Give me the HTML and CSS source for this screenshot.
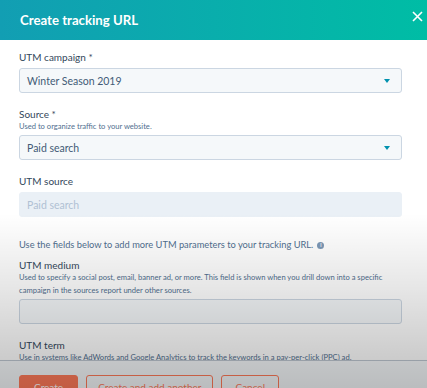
FILE: index.html
```html
<!DOCTYPE html>
<html>
    <head>
        <title>Create tracking URL</title>
        <link rel="stylesheet" href="styles.css">
    </head>
    <body>
        <div class="modal">
            <div class="header">
                <span class="title">Create tracking URL</span>
                <svg class="close" width="11" height="11" viewBox="0 0 11 11">
                    <path d="M1 1L10 10M10 1L1 10" stroke="#fff" stroke-width="1.6" fill="none"/>
                </svg>
            </div>
            <div class="content">
                <div class="field first">
                    <div class="label">UTM campaign *</div>
                    <div class="select">
                        <span>Winter Season 2019</span>
                        <span class="caret"></span>
                    </div>
                </div>
                <div class="field">
                    <div class="label">Source *</div>
                    <div class="help">Used to organize traffic to your website.</div>
                    <div class="select">
                        <span>Paid search</span>
                        <span class="caret"></span>
                    </div>
                </div>
                <div class="field">
                    <div class="label">UTM source</div>
                    <div class="input disabled">Paid search</div>
                </div>
                <div class="intro">
                    <span>Use the fields below to add more UTM parameters to your tracking URL.</span>
                    <span class="info">i</span>
                </div>
                <div class="field tight">
                    <div class="label">UTM medium</div>
                    <div class="help">Used to specify a social post, email, banner ad, or more. This field is shown when you drill down into a specific campaign in the sources report under other sources.</div>
                    <div class="input"></div>
                </div>
                <div class="field">
                    <div class="label">UTM term</div>
                    <div class="help">Use in systems like AdWords and Google Analytics to track the keywords in a pay-per-click (PPC) ad.</div>
                </div>
            </div>
            <div class="footer">
                <div class="button primary">Create</div>
                <div class="button">Create and add another</div>
                <div class="button cancel">Cancel</div>
            </div>
        </div>
        <div class="shade"></div>
    </body>
</html>
```

FILE: styles.css
```css
html, body {
    margin: 0;
    height: 388px;
    overflow: hidden;
}
body {
    font-family: Lato, "Noto Sans", sans-serif;
    color: #33475b;
    background-color: #fff;
}
.modal {
    display: flex;
    flex-direction: column;
    height: 388px;
}
.header {
    height: 40px;
    flex: none;
    display: flex;
    align-items: center;
    justify-content: space-between;
    padding: 0 4px 0 20px;
    background: linear-gradient(to right, #129eb3, #00bda5);
}
.title {
    color: #fff;
    font-size: 13.2px;
    font-weight: bold;
}
.close {
    margin-top: -8px;
}
.content {
    flex: 1;
    overflow: hidden;
    padding: 10px 25px 0 19px;
}
.field {
    margin-top: 14px;
}
.field.first {
    margin-top: 0;
}
.field.tight {
    margin-top: 6px;
}
.label {
    font-size: 10px;
    line-height: 14px;
    margin-bottom: 4px;
}
.help {
    font-size: 7.6px;
    line-height: 13px;
    color: #516f90;
    margin-top: -5px;
    margin-bottom: 2px;
}
.select, .input {
    height: 23px;
    border: 1px solid #cbd6e2;
    border-radius: 3px;
    background-color: #f5f8fa;
    display: flex;
    align-items: center;
    justify-content: space-between;
    padding: 0 11px 0 7px;
    font-size: 10.5px;
}
.select {
    color: #425b76;
}
.input.disabled {
    background-color: #eaf0f6;
    border-color: #eaf0f6;
    color: #b0c1d4;
}
.caret {
    width: 0;
    height: 0;
    border-left: 3.5px solid transparent;
    border-right: 3.5px solid transparent;
    border-top: 4px solid #0091ae;
}
.intro {
    margin-top: 21px;
    display: flex;
    align-items: center;
    gap: 4px;
    font-size: 9.3px;
    line-height: 14px;
    color: #516f90;
}
.info {
    width: 7px;
    height: 7px;
    border-radius: 50%;
    background-color: #7c98b6;
    color: #fff;
    font-size: 5px;
    line-height: 7px;
    text-align: center;
    font-weight: bold;
}
.footer {
    flex: none;
    height: 13px;
    border-top: 1px solid #bfc8d2;
    background-color: #f5f8fa;
    padding: 14px 0 0 19px;
    display: flex;
    gap: 8px;
    align-items: flex-start;
}
.button {
    flex: none;
    height: 28px;
    padding: 0 11px;
    border: 1px solid #ff7a59;
    border-radius: 3px;
    color: #ff7a59;
    background-color: transparent;
    font-size: 10px;
    line-height: 23px;
}
.button.primary {
    background-color: #ff7a59;
    color: #fff;
    padding: 0 14px;
}
.button.cancel {
    padding: 0 13px;
}
.shade {
    position: absolute;
    left: 0;
    top: 0;
    width: 427px;
    height: 388px;
    pointer-events: none;
    background: linear-gradient(to bottom, rgba(0,0,0,0) 55%, rgba(0,0,0,0.1) 75%, rgba(0,0,0,0.2) 92%, rgba(0,0,0,0.24) 100%);
}
```
